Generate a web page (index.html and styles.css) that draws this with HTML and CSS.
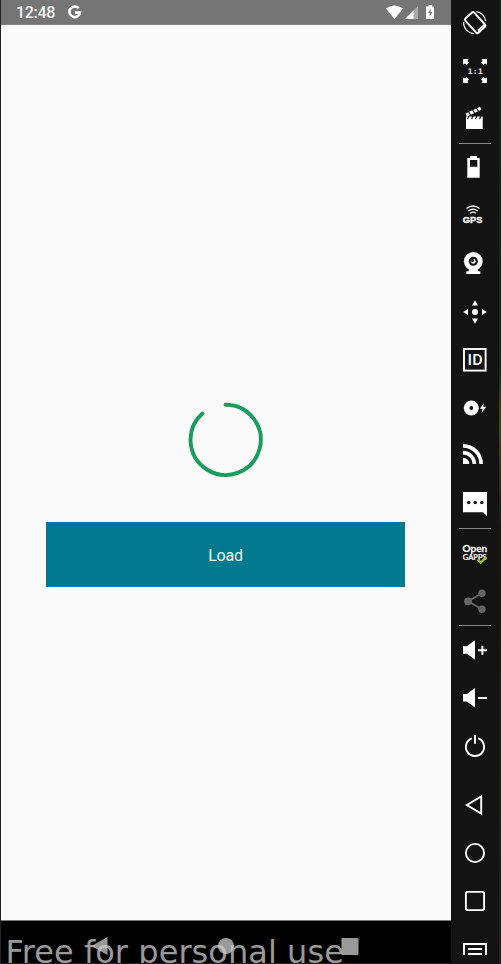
FILE: index.html
```
<!DOCTYPE html>
<html lang="en">
<head>
<meta charset="utf-8">
<title>Emulator</title>
<link rel="stylesheet" href="styles.css">
</head>
<body>
<div class="window">
  <main class="phone">
    <header class="status">
      <span class="time">12:48</span>
      <svg class="google" width="14" height="14" viewBox="0 0 14 14"><path d="M10.7 3.2A5.3 5.3 0 1 0 12 7.6H7"/></svg>
      <svg class="signals" width="52" height="16" viewBox="0 0 52 16">
        <path d="M0 4.4Q8.5-1.6 17 4.4L8.5 15z"/>
        <path class="faint" d="M32 2V15H19z"/><path d="M27.5 6.5V15H19z"/>
        <path d="M42.5 1H46V2.5H48V15H40V2.5H42.5z"/><path class="cut" d="M45 4.5L42 9H44L43.5 12.8L46.5 8H44.5z"/>
      </svg>
    </header>
    <section class="content">
      <svg class="spinner" width="76" height="76" viewBox="0 0 76 76"><path d="M37.5 2.7A35.1 35.1 0 1 1 14.4 11.5"/></svg>
      <button class="load">Load</button>
    </section>
    <footer class="nav">
      <svg width="450" height="43" viewBox="0 0 450 43">
        <text class="watermark" x="4.6" y="42.6">Free for personal use</text>
        <path class="keys" d="M90.5 26L106.5 17V35z"/><circle class="keys" cx="225" cy="26" r="8"/><rect class="keys" x="340.5" y="18" width="17" height="17" rx="1"/>
      </svg>
    </footer>
  </main>
  <aside class="tools">
    <svg viewBox="0 0 48 48"><g class="line"><rect x="18.2" y="14" width="12" height="19.2" rx="1.5" transform="rotate(-42 24.2 23.6)"/><path d="M26.9 31.6L33.6 25.6" /><path class="thin" d="M25.5 12.6A11.3 11.3 0 0 1 34.6 22M12.6 23A11.3 11.3 0 0 0 23 34.8"/></g></svg>
    <svg viewBox="0 0 48 48"><path d="M12 12H17.5L16.4 14L18 15.6L15.6 18L14 16.4L12 17.5zM36 12V17.5L34 16.4L32.4 18L30 15.6L31.6 14L30.5 12zM12 36V30.5L14 31.6L15.6 30L18 32.4L16.4 34L17.5 36zM36 36H30.5L31.6 34L30 32.4L32.4 30L34 31.6L36 30.5z"/><text class="ratio" x="16.5" y="26.8" textLength="15.5">1:1</text></svg>
    <svg viewBox="0 0 48 48"><path d="M15 21.5H31.7V34H15zM14.5 18.5L29 11.7L30.5 14.7L16 21.5z"/><path class="slit" d="M18 21L16.5 24M22 21L20.5 24M26 21L24.5 24M30 21L28.5 24M17.5 16.5L19.5 20M21.5 14.7L23.5 18M25.5 13L27.5 16.5"/></svg>
    <hr>
    <svg viewBox="0 0 48 48"><path fill-rule="evenodd" d="M19 12H26V14H28.7V33.7H16.3V14H19zM19 16V22.7H26.3V16z"/></svg>
    <svg viewBox="0 0 48 48"><path class="line mid" d="M15.5 16.5Q22 11.5 28.5 16.5M17.3 19Q22 15.3 26.7 19M19.3 21.2Q22 19 24.7 21.2"/><text class="gps" x="11.8" y="30.8" textLength="19.7" lengthAdjust="spacingAndGlyphs">GPS</text></svg>
    <svg viewBox="0 0 48 48"><circle cx="22.3" cy="21.3" r="9.4"/><path d="M18 29H26.7L27 31.2H29.3V34H15.3V31.2H17.6z"/><circle class="dark" cx="22.3" cy="21.3" r="4.5"/><circle cx="22.3" cy="21.3" r="2.4"/><circle class="dark" cx="21.6" cy="20.6" r="1.5"/></svg>
    <svg viewBox="0 0 48 48"><circle cx="24" cy="24" r="3"/><path d="M24 12.3L27 17.5H21zM24 35.7L21 30.5H27zM12.2 24L17 21V27zM35.8 24L31 27V21z"/></svg>
    <svg viewBox="0 0 48 48"><rect class="line" x="13" y="13" width="21.6" height="21.6"/><text class="id" x="16.6" y="29.2" textLength="15" lengthAdjust="spacingAndGlyphs">ID</text></svg>
    <svg viewBox="0 0 48 48"><circle cx="20.3" cy="24" r="7.5"/><circle class="dark" cx="20.3" cy="24" r="1.9"/><path d="M33 19L28.8 24.8H31.6L30.6 29L35.2 22.8H32.2z"/></svg>
    <svg viewBox="0 0 48 48"><path d="M12 12A20 20 0 0 1 32 32H28.3A16.3 16.3 0 0 0 12 15.7zM12 18.8A13.2 13.2 0 0 1 25.2 32H21.6A9.6 9.6 0 0 0 12 22.4zM12 25.7A6.3 6.3 0 0 1 18.3 32H12z"/></svg>
    <svg viewBox="0 0 48 48"><path d="M12 12H36V36L32 32.3H12z"/><g class="dark"><circle cx="17.7" cy="22.5" r="1.8"/><circle cx="24.2" cy="22.5" r="1.8"/><circle cx="30.8" cy="22.5" r="1.8"/></g></svg>
    <hr>
    <svg viewBox="0 0 48 48"><text class="open" x="11.6" y="23" textLength="24.6" lengthAdjust="spacingAndGlyphs">Open</text><text class="gapps" x="11.8" y="31.4" textLength="23.8" lengthAdjust="spacingAndGlyphs">GAPPS</text><path class="check" d="M26.5 30.5L29.7 33.6L35.3 28"/></svg>
    <svg class="share" viewBox="0 0 48 48"><circle cx="17" cy="24.3" r="3.9"/><circle cx="31" cy="16.2" r="3.7"/><circle cx="31" cy="32.3" r="3.7"/><path d="M31 16.2L17 24.3L31 32.3"/></svg>
    <hr>
    <svg viewBox="0 0 48 48"><path d="M12 20.3H15.8L24 14.2V33.8L15.8 27.7H12zM30.4 19.8H32.4V23.3H36V25.3H32.4V28.8H30.4V25.3H27V23.3H30.4z"/></svg>
    <svg viewBox="0 0 48 48"><path d="M12 20H15.8L24 13.9V33.5L15.8 27.4H12zM27 23H36V25H27z"/></svg>
    <svg viewBox="0 0 48 48"><path class="line" d="M20.8 16.4A9.1 9.1 0 1 0 27.2 16.4M24 13V21.7"/></svg>
    <svg class="gap" viewBox="0 0 48 48"><path class="line" d="M15.8 24L30.2 15.5V32.5z"/></svg>
    <svg viewBox="0 0 48 48"><circle class="line" cx="24" cy="24" r="9.1"/></svg>
    <svg viewBox="0 0 48 48"><rect class="line" x="14.9" y="14.9" width="18.2" height="18.2" rx="1.8"/></svg>
    <svg viewBox="0 0 48 48"><path class="line" d="M13 30V19H35V30M17 24H31M17 29H31"/></svg>
  </aside>
  <div class="edge"></div>
</div>
</body>
</html>
```
FILE: styles.css
```
body { margin: 0; background: #131313; font-family: Roboto, sans-serif; }
.window { display: flex; width: 501px; height: 964px; overflow: hidden; }
.phone { display: flex; flex-direction: column; box-sizing: border-box; width: 451px; border-left: 1px solid #222; border-bottom: 1px solid #222; background: #fafafa; }
.status { display: flex; align-items: center; box-sizing: border-box; height: 25px; padding: 0 13px 0 15px; background: #757575; border-bottom: 1px solid #858585; color: #f4f4f4; }
.time { width: 52px; font-size: 16px; font-weight: 500; line-height: 24px; letter-spacing: -0.3px; padding-top: 1px; }
.google { fill: none; stroke: #fff; stroke-width: 2.6; }
.signals { margin-left: auto; fill: #fff; }
.faint { fill: #aaa; }
.cut { fill: #757575; }
.content { display: flex; flex: 1; flex-direction: column; align-items: center; padding-top: 377px; }
.spinner { display: block; margin-right: 1px; fill: none; stroke: #189d5c; stroke-width: 3.9; stroke-linecap: round; }
.load { width: 359px; height: 65px; margin: 44px 1px 0 0; padding: 2px 0 0; border: 0; background: #00798f; color: #eef5f7; font: 16px Roboto, sans-serif; letter-spacing: -0.2px; }
.nav { height: 43px; background: #000; border-top: 1px solid #777; box-sizing: border-box; overflow: hidden; }
.nav svg { display: block; margin-top: -1px; }
.watermark { font: 32px "DejaVu Sans", sans-serif; fill: #999; letter-spacing: 0.05px; }
.keys { fill: #ccc; fill-opacity: .75; }
.tools { display: flex; flex-direction: column; width: 48px; background: #131313; }
.tools svg { display: block; flex: none; width: 48px; height: 48px; fill: #fff; }
.tools svg:first-child { margin-top: -1px; }
.tools hr { flex: none; width: 32px; height: 1px; margin: 0 auto; border: 0; background: #858585; }
.tools .gap { margin-top: 11px; }
.tools .line { fill: none; stroke: #fff; stroke-width: 1.9; }
.tools .thin { stroke-width: 1.1; }
.tools .mid { stroke-width: 1.3; }
.tools .dark { fill: #131313; }
.slit { fill: none; stroke: #131313; stroke-width: 1.2; }
.ratio { font: bold 7.5px "DejaVu Sans", sans-serif; fill: #ddd; }
.gps { font: bold 8.5px "Liberation Sans", sans-serif; stroke: #fff; stroke-width: .3; }
.id { font: 500 14.4px Roboto, sans-serif; }
.open { font: 600 9.8px Lato, sans-serif; stroke: #fff; stroke-width: .3; }
.gapps { font: 600 6.8px Lato, sans-serif; stroke: #fff; stroke-width: .2; }
.check { fill: none; stroke: #9ac51c; stroke-width: 2.2; }
.tools .share { fill: #666; stroke: #666; stroke-width: 1.8; }
.share circle { stroke: none; }
.share path { fill: none; }
.edge { width: 2px; background: linear-gradient(#14200c, #1d2810 38%, #4a4518 44%, #17170f 55%, #241f1a); }
```
